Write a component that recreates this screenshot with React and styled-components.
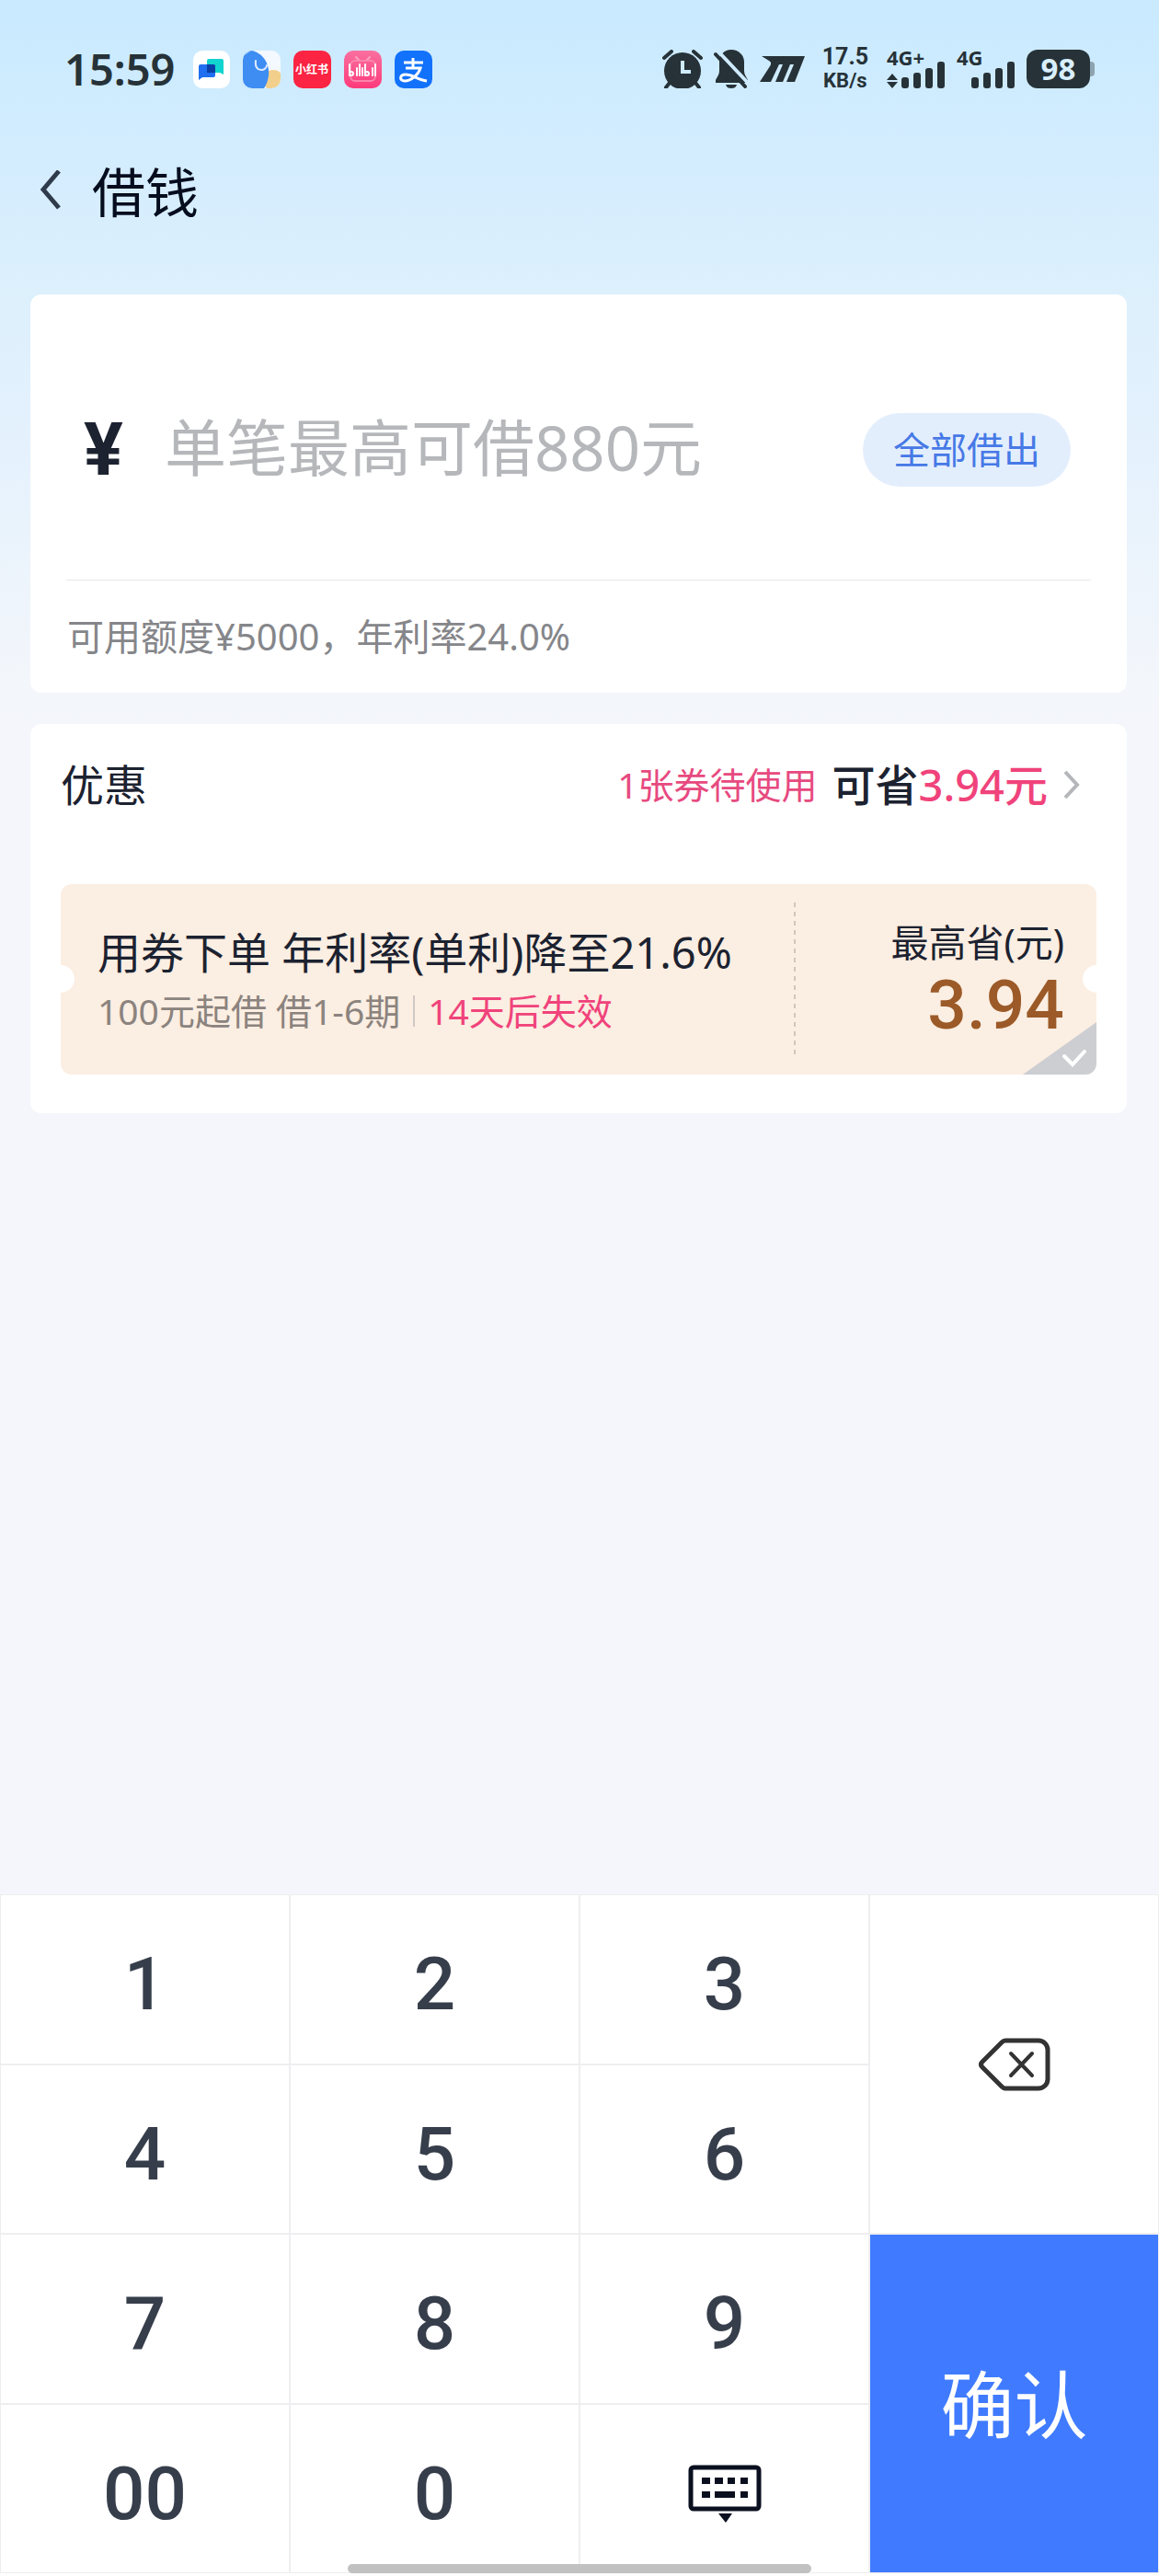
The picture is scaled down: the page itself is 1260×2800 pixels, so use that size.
import React, { useState } from 'react'
import styled, { createGlobalStyle } from 'styled-components'

const GlobalStyle = createGlobalStyle`
  * {
    box-sizing: border-box;
  }
  body {
    margin: 0;
    background: #f5f6fb;
    color: #1c2230;
    font-family: "Noto Sans", "Noto Sans CJK SC", sans-serif;
  }
  button, input {
    font-family: inherit;
    margin: 0;
    padding: 0;
    border: 0;
    background: none;
    color: inherit;
  }
  svg {
    display: block;
    flex: none;
  }
`

const AppIcons = () => (
  <IconRow>
    <svg width="40" height="41" viewBox="0 0 40 41">
      <rect width="40" height="41" rx="10" fill="#fff" />
      <path d="M17 9h14a2 2 0 0 1 2 2v15l-4-2H17a2 2 0 0 1-2-2V11a2 2 0 0 1 2-2z" fill="#12d3cf" />
      <path d="M8 15h14a2 2 0 0 1 2 2v10a2 2 0 0 1-2 2H10l-4 3V17a2 2 0 0 1 2-2z" fill="#1f6ff0" />
      <path d="M15 15h7a2 2 0 0 1 2 2v7h-9z" fill="#0a3fa6" />
    </svg>
    <svg width="41" height="41" viewBox="0 0 41 41">
      <defs>
        <clipPath id="bird"><rect width="41" height="41" rx="10" /></clipPath>
      </defs>
      <g clipPath="url(#bird)">
        <rect width="41" height="41" fill="#f3f9ff" />
        <circle cx="33" cy="32" r="11" fill="#f2cf8a" />
        <path d="M0 0h10c14 4 19 16 18 27-1 7-3 11-5 14H0z" fill="#3d8df2" />
        <path d="M0 0h9L0 6z" fill="#b9dcff" />
        <path d="M14 11c-1 7 2 10 6 10 3 0 6-2 6-5" fill="none" stroke="#dceaff" strokeWidth="2" strokeLinecap="round" />
      </g>
    </svg>
    <svg width="41" height="41" viewBox="0 0 41 41">
      <rect width="41" height="41" rx="10" fill="#fb2442" />
      <text x="20" y="25" fontSize="12" fontWeight="700" fill="#fff" textAnchor="middle">小红书</text>
    </svg>
    <svg width="41" height="41" viewBox="0 0 41 41">
      <defs>
        <linearGradient id="pink" x1="0" y1="0" x2="0" y2="1">
          <stop offset="0" stopColor="#f9709f" />
          <stop offset="1" stopColor="#ff3a7b" />
        </linearGradient>
      </defs>
      <rect width="41" height="41" rx="10" fill="url(#pink)" />
      <path d="M13 7l4 4M28 7l-4 4" stroke="#fba3c2" strokeWidth="2" strokeLinecap="round" />
      <rect x="7" y="11" width="27" height="22" rx="5" fill="none" stroke="#fb84ad" strokeWidth="2" />
      <g stroke="#fff" strokeWidth="2" strokeLinecap="round" fill="none">
        <path d="M6 15v12M14 19v8M17 15v12M20 19v8M23 15v12M31 19v8M34 15v12" />
        <circle cx="8" cy="25" r="2" />
        <circle cx="25" cy="25" r="2" />
      </g>
    </svg>
    <svg width="41" height="41" viewBox="0 0 41 41">
      <rect width="41" height="41" rx="10" fill="#1372fb" />
      <path d="M10 13h21M20 8v11M12 19h16c-2 7-10 14-17 14-6 0-6-7 1-7 8 0 13 6 23 7" fill="none" stroke="#fff" strokeWidth="3" />
    </svg>
  </IconRow>
)

const Alarm = () => (
  <svg width="44" height="42" viewBox="0 0 44 42">
    <circle cx="22" cy="23" r="20" fill="#263238" />
    <path d="M2 9l8-7M42 9l-8-7" stroke="#263238" strokeWidth="4" strokeLinecap="round" />
    <path d="M8 36l-4 5M36 36l4 5" stroke="#263238" strokeWidth="4" strokeLinecap="round" />
    <path d="M22 12v12h9" fill="none" stroke="#cfebff" strokeWidth="4" />
  </svg>
)

const BellOff = () => (
  <svg width="38" height="42" viewBox="0 0 38 42">
    <path d="M19 0c8 0 14 6 14 13v10c0 4 2 6 4 10v3H2v-3c2-4 4-6 4-10V13C6 6 11 0 19 0z" fill="#263238" />
    <path d="M13 38h12c-1 3-3 4-6 4s-5-1-6-4z" fill="#263238" />
    <path d="M5 2l32 34" stroke="#cfebff" strokeWidth="4" />
    <path d="M2 5l32 35" stroke="#263238" strokeWidth="4" strokeLinecap="round" />
  </svg>
)

const SpeedMark = () => (
  <svg width="50" height="28" viewBox="0 0 50 28">
    <path d="M2 0h47L38 28h-9l8-19h-4l-8 19h-8l8-19h-4L12 28H0l11-17c2-3 1-5-1-6z" fill="#263238" />
  </svg>
)

const Signal = ({ label, arrows }) => (
  <svg width="64" height="62" viewBox="0 0 64 62">
    <text x="0" y="27" fontSize="22" fontWeight="700" fill="#263238">{label}</text>
    {arrows && <path d="M6 36l6 7H0zM6 52l6-7H0z" fill="#263238" />}
    <g fill="#263238">
      <rect x="16" y="40" width="8" height="12" rx="3" />
      <rect x="29" y="35" width="8" height="17" rx="3" />
      <rect x="42" y="30" width="8" height="22" rx="3" />
      <rect x="55" y="23" width="8" height="29" rx="3" />
    </g>
  </svg>
)

const Chevron = ({ back }) =>
  back ? (
    <svg width="22" height="48" viewBox="0 0 22 48">
      <path d="M20 1L3 21l17 20" fill="none" stroke="#2f3b4b" strokeWidth="5" />
    </svg>
  ) : (
    <svg width="20" height="32" viewBox="0 0 20 32">
      <path d="M3 2l13 14L3 30" fill="none" stroke="#b4b6ba" strokeWidth="4" />
    </svg>
  )

const Backspace = () => (
  <svg width="78" height="58" viewBox="0 0 78 58">
    <path d="M29 3h36a10 10 0 0 1 10 10v32a10 10 0 0 1-10 10H29c-2 0-3-1-4-2L4 32c-2-2-2-4 0-6L25 5c1-1 2-2 4-2z" fill="none" stroke="#333" strokeWidth="5" />
    <path d="M35 17l23 24M58 17L35 41" stroke="#333" strokeWidth="4" strokeLinecap="round" />
  </svg>
)

const HideKeyboard = () => (
  <svg width="80" height="64" viewBox="0 0 80 64">
    <rect x="3" y="3" width="74" height="45" rx="3" fill="none" stroke="#0b1020" strokeWidth="5" />
    <path d="M15 14h9v7h-9zM29 14h9v7h-9zM43 14h8v7h-8zM57 14h8v7h-8zM15 29h9v7h-9zM29 29h22v7H29zM57 29h8v7h-8zM33 53h15l-7 10z" fill="#0b1020" />
  </svg>
)

const keys = ['1', '2', '3', '4', '5', '6', '7', '8', '9', '00', '0']

const App = () => {
  const [amount, setAmount] = useState('')
  const [useCoupon, setUseCoupon] = useState(true)

  return (
    <Page>
      <GlobalStyle />
      <StatusBar>
        <Clock>15:59</Clock>
        <AppIcons />
        <StatusRight>
          <Alarm />
          <BellOff />
          <SpeedMark />
          <NetSpeed>
            <span>17.5</span>
            <small>KB/s</small>
          </NetSpeed>
          <Signal label="4G+" arrows />
          <Signal label="4G" />
          <Battery>98</Battery>
        </StatusRight>
      </StatusBar>

      <TitleBar>
        <BackButton aria-label="返回"><Chevron back /></BackButton>
        <h1>借钱</h1>
      </TitleBar>

      <Content>
        <Card>
          <AmountRow>
            <Currency htmlFor="amount">¥</Currency>
            <AmountInput
              id="amount"
              inputMode="none"
              placeholder="单笔最高可借880元"
              value={amount}
              onChange={(e) => setAmount(e.target.value)}
            />
            <AllButton onClick={() => setAmount('880')}>全部借出</AllButton>
          </AmountRow>
          <Quota>可用额度¥5000，年利率24.0%</Quota>
        </Card>

        <Card>
          <DiscountRow>
            <h2>优惠</h2>
            <DiscountLink href="#coupons">
              <Pending>1张券待使用</Pending>
              <Saving>可省<b>3.94元</b></Saving>
              <Chevron />
            </DiscountLink>
          </DiscountRow>
          <Coupon>
            <CouponInfo>
              <CouponTitle>用券下单 年利率(单利)降至21.6%</CouponTitle>
              <CouponNote>
                <span>100元起借 借1-6期</span>
                <Expiry>14天后失效</Expiry>
              </CouponNote>
            </CouponInfo>
            <CouponValue>
              <span>最高省(元)</span>
              <strong>3.94</strong>
            </CouponValue>
            <Corner>
              <input
                type="checkbox"
                aria-label="使用优惠券"
                checked={useCoupon}
                onChange={() => setUseCoupon(!useCoupon)}
              />
              <svg width="80" height="57" viewBox="0 0 80 57">
                <path d="M80 0v57H0z" fill="#cdced2" />
                {useCoupon && (
                  <path d="M45 37l9 9 13-14" fill="none" stroke="#fff" strokeWidth="4" strokeLinecap="round" />
                )}
              </svg>
            </Corner>
          </Coupon>
        </Card>
      </Content>

      <Keyboard>
        <KeyGrid>
          {keys.map((key) => (
            <Key key={key} onClick={() => setAmount(amount + key)}>{key}</Key>
          ))}
          <Key aria-label="收起键盘"><HideKeyboard /></Key>
        </KeyGrid>
        <SideKeys>
          <Key aria-label="删除" onClick={() => setAmount(amount.slice(0, -1))}><Backspace /></Key>
          <Key $primary>确认</Key>
        </SideKeys>
        <HomeBar />
      </Keyboard>
    </Page>
  )
}

const Page = styled.div`
  min-height: 100vh;
  display: flex;
  flex-direction: column;
  background: linear-gradient(#c9eaff 0, #d5edfe 200px, #ddf0fc 330px, #e3f1fd 460px, #f3f6fb 740px, #f5f6fb 900px);
`

const StatusBar = styled.div`
  display: flex;
  align-items: center;
  height: 150px;
  padding: 0 70px;
  color: #263238;
`

const Clock = styled.div`
  width: 140px;
  font-size: 47px;
  line-height: 60px;
  font-weight: 600;
`

const IconRow = styled.div`
  display: flex;
  gap: 14px;
`

const StatusRight = styled.div`
  display: flex;
  align-items: center;
  gap: 12px;
  margin-left: auto;
`

const NetSpeed = styled.div`
  display: flex;
  flex-direction: column;
  align-items: center;
  margin: 0 8px 0 6px;
  font-family: Roboto, sans-serif;
  font-size: 25px;
  line-height: 26px;
  font-weight: 700;
  small {
    font-size: 22px;
  }
`

const Battery = styled.div`
  position: relative;
  width: 69px;
  height: 42px;
  margin-right: 5px;
  border-radius: 12px;
  background: #263238;
  color: #d9efff;
  font-size: 33px;
  line-height: 42px;
  font-weight: 700;
  text-align: center;
  &::after {
    content: '';
    position: absolute;
    top: 13px;
    right: -5px;
    width: 5px;
    height: 16px;
    border-radius: 0 4px 4px 0;
    background: #8ea3b0;
  }
`

const TitleBar = styled.header`
  display: flex;
  align-items: center;
  gap: 34px;
  height: 118px;
  padding: 0 44px;
  h1 {
    margin: 0;
    font-size: 58px;
    line-height: 80px;
    font-weight: 400;
    color: #050d1e;
  }
`

const BackButton = styled.button`
  padding: 0;
`

const Content = styled.main`
  display: flex;
  flex-direction: column;
  gap: 34px;
  padding: 52px 35px 52px 33px;
`

const Card = styled.section`
  padding: 0 33px;
  border-radius: 12px;
  background: #fff;
`

const AmountRow = styled.div`
  display: flex;
  align-items: center;
  margin: 0 6px;
  padding: 129px 22px 101px 19px;
`

const Currency = styled.label`
  width: 88px;
  font-family: Roboto, sans-serif;
  font-size: 80px;
  line-height: 80px;
  font-weight: 700;
`

const AmountInput = styled.input`
  flex: 1;
  min-width: 0;
  height: 80px;
  padding-bottom: 6px;
  font-size: 67px;
  outline: none;
  &::placeholder {
    color: #b5b7ba;
    opacity: 1;
  }
`

const AllButton = styled.button`
  flex: none;
  height: 80px;
  padding: 0 33px 4px;
  border-radius: 40px;
  background: #e3eefd;
  color: #4679e6;
  font-size: 40px;
`

const Quota = styled.p`
  margin: 0 6px;
  padding: 31px 1px;
  border-top: 1px solid #e6e8eb;
  color: #85868a;
  font-size: 40px;
  line-height: 60px;
`

const DiscountRow = styled.div`
  display: flex;
  align-items: center;
  justify-content: space-between;
  padding: 36px 17px 78px 0;
  h2 {
    margin: 0;
    font-size: 47px;
    line-height: 60px;
    font-weight: 400;
  }
`

const DiscountLink = styled.a`
  display: flex;
  align-items: center;
  gap: 16px;
  line-height: 60px;
  color: inherit;
  text-decoration: none;
`

const Pending = styled.span`
  color: #e74a80;
  font-size: 39px;
`

const Saving = styled.span`
  font-size: 47px;
  font-weight: 500;
  b {
    color: #f0437b;
    font-weight: 500;
  }
`

const Coupon = styled.div`
  position: relative;
  display: flex;
  height: 207px;
  margin-bottom: 42px;
  border-radius: 12px;
  overflow: hidden;
  background: #fbeee2;
  &::before,
  &::after {
    content: '';
    position: absolute;
    top: 88px;
    width: 30px;
    height: 30px;
    border-radius: 50%;
    background: #fff;
  }
  &::before {
    left: -15px;
  }
  &::after {
    right: -15px;
  }
`

const CouponInfo = styled.div`
  flex: 1;
  padding: 42px 0 0 40px;
  line-height: 64px;
`

const CouponTitle = styled.div`
  font-size: 47px;
`

const CouponNote = styled.div`
  display: flex;
  align-items: center;
  color: #8b837e;
  font-size: 39px;
`

const Expiry = styled.span`
  display: flex;
  align-items: center;
  color: #f0437b;
  &::before {
    content: '';
    width: 2px;
    height: 34px;
    margin: 0 14px;
    background: #cfc9c5;
  }
`

const CouponValue = styled.div`
  display: flex;
  flex-direction: column;
  width: 329px;
  margin: 20px 0;
  padding: 13px 35px 0 0;
  text-align: right;
  background: repeating-linear-gradient(#d3c5ba 0 5px, transparent 5px 10px) left / 2px 100% no-repeat;
  span {
    font-size: 41px;
    line-height: 60px;
  }
  strong {
    color: #9b5a28;
    font-family: Roboto, sans-serif;
    font-size: 75px;
    line-height: 76px;
    font-weight: 500;
  }
`

const Corner = styled.label`
  position: absolute;
  right: 0;
  bottom: 0;
  display: grid;
  input,
  svg {
    grid-area: 1 / 1;
  }
  input {
    appearance: none;
  }
`

const Keyboard = styled.div`
  position: relative;
  display: grid;
  grid-template-columns: 3fr 1fr;
  height: 741px;
  margin-top: auto;
  padding-bottom: 3px;
  background: #fff;
`

const KeyGrid = styled.div`
  display: grid;
  grid-template: repeat(4, 1fr) / repeat(3, 1fr);
`

const SideKeys = styled.div`
  display: grid;
  grid-template-rows: 1fr 1fr;
`

const Key = styled.button`
  display: flex;
  align-items: center;
  justify-content: center;
  border: 1px solid #eeeef0;
  background: ${(p) => (p.$primary ? '#407bff' : '#fff')};
  color: ${(p) => (p.$primary ? '#fff' : '#373e4b')};
  font-family: ${(p) => (p.$primary ? 'inherit' : 'Roboto, sans-serif')};
  font-size: 80px;
  font-weight: ${(p) => (p.$primary ? 400 : 500)};
  padding-bottom: ${(p) => (p.$primary ? '8px' : 0)};
  ${KeyGrid} & {
    padding-top: 12px;
  }
`

const HomeBar = styled.div`
  position: absolute;
  bottom: 3px;
  left: 30%;
  width: 40%;
  height: 10px;
  border-radius: 5px;
  background: #c1c1c1;
`

export default App
